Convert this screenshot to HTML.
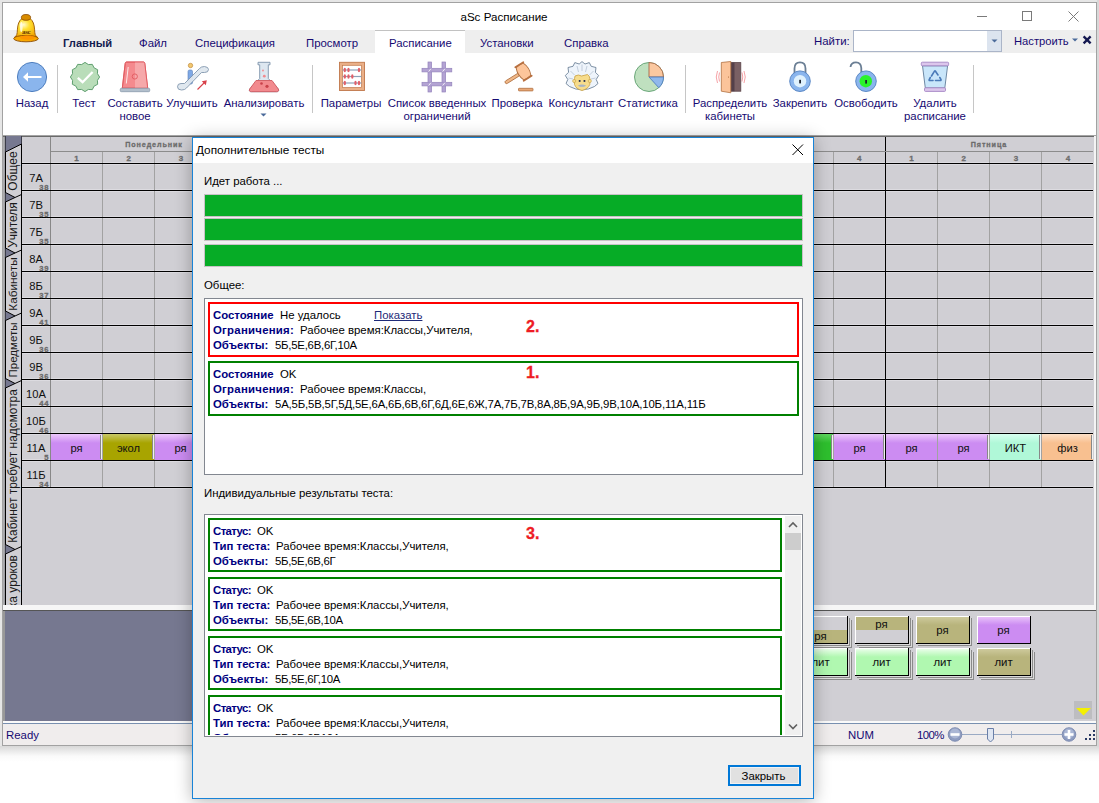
<!DOCTYPE html><html><head><meta charset="utf-8"><style>
html,body{margin:0;padding:0;}
body{width:1099px;height:803px;position:relative;overflow:hidden;background:#fff;font-family:"Liberation Sans",sans-serif;}
.t{position:absolute;white-space:nowrap;line-height:14px;}
.c{width:300px;text-align:center;}
.r{position:absolute;box-sizing:border-box;}
svg{position:absolute;overflow:visible;}
</style></head><body>

<div class="r" style="left:0px;top:0px;width:1099px;height:746px;background:#e6e6e6;"></div>
<div class="r" style="left:0px;top:746px;width:1099px;height:57px;background:linear-gradient(#d8d8d8,#fafafa 10px,#fff 16px);"></div>
<div class="r" style="left:1097px;top:0px;width:2px;height:746px;background:#d8d8d8;"></div>
<div class="r" style="left:2px;top:2px;width:1095px;height:744px;background:#fff;border:1px solid #a2a2a2;"></div>
<div class="t c" style="left:354px;top:10px;font-size:11.6px;color:#000;font-weight:normal;">aSc Расписание</div>
<svg style="left:0;top:0" width="1099" height="30"><g stroke="#7a7a7a" stroke-width="1" fill="none"><line x1="977" y1="16.5" x2="987" y2="16.5"/><rect x="1022.5" y="11.5" width="9" height="9"/><line x1="1068.5" y1="11.5" x2="1078.5" y2="21.5"/><line x1="1078.5" y1="11.5" x2="1068.5" y2="21.5"/></g></svg>
<div class="r" style="left:3px;top:30px;width:1093px;height:23px;background:#eeeeee;"></div>
<div class="r" style="left:375px;top:30px;width:90px;height:24px;background:#fff;border-top:1px solid #c2c2c2;"></div>
<div class="t" style="left:63px;top:36px;font-size:11.2px;color:#141c50;font-weight:bold;">Главный</div>
<div class="t" style="left:139px;top:36px;font-size:11.4px;color:#160a72;font-weight:normal;">Файл</div>
<div class="t" style="left:195px;top:36px;font-size:11.4px;color:#160a72;font-weight:normal;">Спецификация</div>
<div class="t" style="left:306px;top:36px;font-size:11.4px;color:#160a72;font-weight:normal;">Просмотр</div>
<div class="t" style="left:389px;top:36px;font-size:11.4px;color:#160a72;font-weight:normal;">Расписание</div>
<div class="t" style="left:480px;top:36px;font-size:11.4px;color:#160a72;font-weight:normal;">Установки</div>
<div class="t" style="left:564px;top:36px;font-size:11.4px;color:#160a72;font-weight:normal;">Справка</div>
<div class="t" style="left:814px;top:34px;font-size:11.4px;color:#160a72;font-weight:normal;">Найти:</div>
<div class="r" style="left:853px;top:30px;width:149px;height:22px;background:#fff;border:1px solid #abb5c8;"></div>
<div class="r" style="left:987px;top:31px;width:14px;height:20px;background:#dce4ef;"></div>
<svg style="left:0;top:0" width="1099" height="60"><path d="M991.5 39.5 L997.5 39.5 L994.5 42.5 Z" fill="#4a6a9a"/><path d="M1072 38.5 L1078 38.5 L1075 41.5 Z" fill="#4a6a9a"/><g stroke="#141850" stroke-width="2.3"><line x1="1083.6" y1="36.4" x2="1090.6" y2="43.4"/><line x1="1090.6" y1="36.4" x2="1083.6" y2="43.4"/></g></svg>
<div class="t" style="left:1014px;top:34px;font-size:11.2px;color:#160a72;font-weight:normal;">Настроить</div>
<div class="r" style="left:3px;top:53px;width:1093px;height:82px;background:#fff;"></div>
<div class="r" style="left:3px;top:135px;width:1093px;height:1px;background:#a4a4a4;"></div>
<div class="r" style="left:3px;top:136px;width:1093px;height:1px;background:#6a6a6a;"></div>
<div class="t c" style="left:-118px;top:96px;font-size:11.4px;color:#160a72;font-weight:normal;">Назад</div>
<div class="t c" style="left:-66px;top:96px;font-size:11.4px;color:#160a72;font-weight:normal;">Тест</div>
<div class="t c" style="left:-15px;top:96px;font-size:11.4px;color:#160a72;font-weight:normal;">Составить</div>
<div class="t c" style="left:-15px;top:109px;font-size:11.4px;color:#160a72;font-weight:normal;">новое</div>
<div class="t c" style="left:42px;top:96px;font-size:11.4px;color:#160a72;font-weight:normal;">Улучшить</div>
<div class="t c" style="left:114px;top:96px;font-size:11.4px;color:#160a72;font-weight:normal;">Анализировать</div>
<div class="t c" style="left:201px;top:96px;font-size:11.4px;color:#160a72;font-weight:normal;">Параметры</div>
<div class="t c" style="left:287px;top:96px;font-size:11.4px;color:#160a72;font-weight:normal;">Список введенных</div>
<div class="t c" style="left:287px;top:109px;font-size:11.4px;color:#160a72;font-weight:normal;">ограничений</div>
<div class="t c" style="left:367px;top:96px;font-size:11.4px;color:#160a72;font-weight:normal;">Проверка</div>
<div class="t c" style="left:431px;top:96px;font-size:11.4px;color:#160a72;font-weight:normal;">Консультант</div>
<div class="t c" style="left:498px;top:96px;font-size:11.4px;color:#160a72;font-weight:normal;">Статистика</div>
<div class="t c" style="left:580px;top:96px;font-size:11.4px;color:#160a72;font-weight:normal;">Распределить</div>
<div class="t c" style="left:580px;top:109px;font-size:11.4px;color:#160a72;font-weight:normal;">кабинеты</div>
<div class="t c" style="left:650px;top:96px;font-size:11.4px;color:#160a72;font-weight:normal;">Закрепить</div>
<div class="t c" style="left:716px;top:96px;font-size:11.4px;color:#160a72;font-weight:normal;">Освободить</div>
<div class="t c" style="left:785px;top:96px;font-size:11.4px;color:#160a72;font-weight:normal;">Удалить</div>
<div class="t c" style="left:785px;top:109px;font-size:11.4px;color:#160a72;font-weight:normal;">расписание</div>
<div class="r" style="left:57px;top:65px;width:1px;height:48px;background:#c6c6c6;"></div>
<div class="r" style="left:312px;top:65px;width:1px;height:48px;background:#c6c6c6;"></div>
<div class="r" style="left:685px;top:65px;width:1px;height:48px;background:#c6c6c6;"></div>
<div class="r" style="left:973px;top:65px;width:1px;height:48px;background:#c6c6c6;"></div>
<svg style="left:0;top:0" width="1099" height="130"><path d="M260.5 113.5 L266.5 113.5 L263.5 116.5 Z" fill="#4a6a9a"/></svg>
<svg style="left:0;top:0" width="1099" height="135" viewBox="0 0 1099 135">
<defs>
<radialGradient id="bellg" cx="0.4" cy="0.35" r="0.7"><stop offset="0" stop-color="#fffbd0"/><stop offset="0.35" stop-color="#ffe030"/><stop offset="1" stop-color="#f0a000"/></radialGradient>
</defs>
<!-- bell logo -->
<g>
<path d="M20 20.5 C22 16.8 30 16.8 32 20.5 C34.3 23.5 34.5 28 34.8 32.5 C35 35.5 36.5 36.5 38 37.8 L14 37.8 C15.5 36.5 17 35.5 17.2 32.5 C17.5 28 17.7 23.5 20 20.5 Z" fill="url(#bellg)" stroke="#9a5800" stroke-width="0.9"/>
<ellipse cx="21.3" cy="27" rx="1.3" ry="5" fill="#fff" opacity="0.75"/>
<ellipse cx="26" cy="38.6" rx="12.3" ry="3.2" fill="#f8a800" stroke="#8a4a00" stroke-width="0.9"/>
<ellipse cx="27.5" cy="37.5" rx="7.5" ry="2.2" fill="#ff9000" opacity="0.8"/>
<ellipse cx="26" cy="17.4" rx="4.6" ry="2.9" fill="#d88c00" stroke="#8a4a00" stroke-width="0.8"/>
<text x="26.2" y="34" font-family="Liberation Serif" font-size="7" text-anchor="middle" fill="#6a3800" font-weight="bold" letter-spacing="-0.3">asc</text>
</g>
<!-- Назад -->
<circle cx="32" cy="77" r="14.6" fill="#8ab5ed" stroke="#4f7fbf" stroke-width="1"/>
<path d="M23 77 L28 72.3 L28 75.9 L41.5 75.9 L41.5 78.1 L28 78.1 L28 81.7 Z" fill="#fff"/>
<!-- Тест badge -->
<path d="M85.00 62.40 L88.34 64.54 L92.30 64.36 L94.12 67.88 L97.64 69.70 L97.46 73.66 L99.60 77.00 L97.46 80.34 L97.64 84.30 L94.12 86.12 L92.30 89.64 L88.34 89.46 L85.00 91.60 L81.66 89.46 L77.70 89.64 L75.88 86.12 L72.36 84.30 L72.54 80.34 L70.40 77.00 L72.54 73.66 L72.36 69.70 L75.88 67.88 L77.70 64.36 L81.66 64.54 Z" fill="#b9ddb9" stroke="#5f9f6f" stroke-width="1"/>
<polyline points="77.8,77.8 82.6,82.2 92.6,72" fill="none" stroke="#fff" stroke-width="2.3"/>
<!-- Siren -->
<path d="M126.5 62 L143.5 62 Q144.5 62 144.8 63.5 L147.7 88.2 L122.3 88.2 L125.2 63.5 Q125.5 62 126.5 62 Z" fill="#f48a8e" stroke="#e05a60" stroke-width="0.9"/>
<path d="M135 62 L143.5 62 Q144.5 62 144.8 63.5 L147.7 88.2 L135 88.2 Z" fill="#f6a8aa"/>
<path d="M126.5 62 L143.5 62 Q144.5 62 144.8 63.5 L147.7 88.2 L122.3 88.2 L125.2 63.5 Q125.5 62 126.5 62 Z" fill="none" stroke="#e05a60" stroke-width="0.9"/>
<line x1="128.2" y1="67" x2="126.3" y2="83.5" stroke="#fff" stroke-width="0.9" opacity="0.9"/>
<circle cx="134.8" cy="76.5" r="2.6" fill="none" stroke="#e05a60" stroke-width="0.9"/>
<rect x="120.3" y="88.3" width="29.4" height="3.4" rx="1" fill="#b2bfcc" stroke="#8a9aac" stroke-width="0.8"/>
<!-- Escalator -->
<circle cx="190.5" cy="65.5" r="2.2" fill="#f2c870" stroke="#c08a3a" stroke-width="0.7"/>
<rect x="188" y="70" width="4.5" height="14" rx="1.5" fill="#7fa9e6" stroke="#5a80b8" stroke-width="0.6"/>
<path d="M181 83.5 L184.5 83.5 L199.5 68.5 Q201 66.5 204.5 66.5 Q208.5 67 208.5 69.5 Q208.5 72.5 204.5 72.5 L201.5 72.5 L186.5 88 Q185 90 181.5 90 Q177.5 90 177.5 86.8 Q177.5 83.5 181 83.5 Z" fill="#dfe7ef" stroke="#7d93aa" stroke-width="0.9" opacity="0.95"/>
<line x1="197.5" y1="89.5" x2="205.5" y2="81.5" stroke="#d8404a" stroke-width="1.1"/>
<path d="M206.8 80.2 L201.8 81.2 L205.8 85.2 Z" fill="#d8404a"/>
<!-- Flask -->
<path d="M258 62.3 L270 62.3 L270 64.8 L268.3 64.8 L268.3 78.5 L278.3 89 Q279.5 91.7 276.5 91.7 L251.5 91.7 Q248.5 91.7 249.7 89 L259.7 78.5 L259.7 64.8 L258 64.8 Z" fill="#dde7f0" stroke="#7d93aa" stroke-width="0.9"/>
<path d="M256 80.5 L272 80.5 L278.3 89 Q279.5 91.7 276.5 91.7 L251.5 91.7 Q248.5 91.7 249.7 89 Z" fill="#f28a8e" stroke="#d05a60" stroke-width="0.9"/>
<circle cx="263" cy="70.5" r="0.9" fill="#f28a8e"/><circle cx="264.3" cy="76.2" r="1.4" fill="#f28a8e"/>
<circle cx="261.5" cy="83.5" r="1.3" fill="#c8424a"/><circle cx="267" cy="86.3" r="1.6" fill="#c8424a"/>
<!-- Abacus -->
<rect x="339.5" y="62.3" width="25" height="28.2" fill="#eab088" stroke="#c0784a" stroke-width="0.9"/>
<rect x="342.5" y="65.3" width="19" height="22.2" fill="#fff" stroke="#c0784a" stroke-width="0.7"/>
<g stroke="#8ea2b8" stroke-width="1.2"><line x1="342.5" y1="70" x2="361.5" y2="70"/><line x1="342.5" y1="76.5" x2="361.5" y2="76.5"/><line x1="342.5" y1="83" x2="361.5" y2="83"/></g>
<g fill="#e0606a"><ellipse cx="344.8" cy="70" rx="1.2" ry="2.3"/><ellipse cx="348.5" cy="70" rx="1.2" ry="2.3"/><ellipse cx="359" cy="70" rx="1.2" ry="2.3"/>
<ellipse cx="344.8" cy="76.5" rx="1.2" ry="2.3"/><ellipse cx="348.5" cy="76.5" rx="1.2" ry="2.3"/><ellipse cx="352.3" cy="76.5" rx="1.2" ry="2.3"/>
<ellipse cx="344.8" cy="83" rx="1.2" ry="2.3"/><ellipse cx="355.5" cy="83" rx="1.2" ry="2.3"/><ellipse cx="359" cy="83" rx="1.2" ry="2.3"/></g>
<!-- Hash -->
<g fill="#b3a3d3" stroke="#9484bc" stroke-width="0.7">
<rect x="428" y="62" width="3.6" height="30"/><rect x="442" y="62" width="3.6" height="30"/>
<rect x="422" y="68.3" width="29.8" height="3.6"/><rect x="422" y="82.3" width="29.8" height="3.6"/>
</g>
<g fill="#b3a3d3"><rect x="428.4" y="68.7" width="2.8" height="2.8"/><rect x="442.4" y="68.7" width="2.8" height="2.8"/><rect x="428.4" y="82.7" width="2.8" height="2.8"/><rect x="442.4" y="82.7" width="2.8" height="2.8"/></g>
<g stroke="#fff" stroke-width="0.8"><line x1="428.6" y1="71.6" x2="431" y2="68.6"/><line x1="442.6" y1="71.6" x2="445" y2="68.6"/><line x1="428.6" y1="85.6" x2="431" y2="82.6"/><line x1="442.6" y1="85.6" x2="445" y2="82.6"/></g>
<!-- Gavel -->
<g transform="translate(523.5 71.5) rotate(-32)">
<rect x="-21.5" y="-1.5" width="16.5" height="3" rx="1.5" fill="#f0b888" stroke="#b07040" stroke-width="0.8"/>
<path d="M-4.2 -7.2 Q0 -8.4 4.2 -7.2 Q7.4 0 4.2 7.2 Q0 8.4 -4.2 7.2 Q-7.4 0 -4.2 -7.2 Z" fill="#fdc59a" stroke="#b07040" stroke-width="0.9"/>
<rect x="-5.6" y="-8.8" width="11.2" height="1.8" rx="0.9" fill="#b87040"/>
<rect x="-5.6" y="7" width="11.2" height="1.8" rx="0.9" fill="#b87040"/>
</g>
<rect x="518.5" y="88.3" width="14.5" height="2.6" rx="0.6" fill="#e8a878" stroke="#b07040" stroke-width="0.8"/>
<!-- Einstein -->
<path d="M569.5 86.5 L566 83.5 L567.8 79.5 L565.3 75.5 L568.6 72.3 L568 67.5 L573 66.3 L574.8 62.6 L579.2 64 L582 61.6 L585 64 L589.3 62.6 L591.2 66.3 L596 67.5 L595.4 72.3 L598.6 75.5 L596.2 79.5 L598 83.5 L594.5 86.5 Q588.5 89.8 582 89.8 Q575.5 89.8 569.5 86.5 Z" fill="#eef4fb" stroke="#60768e" stroke-width="0.8" stroke-linejoin="round"/>
<g stroke="#a4b4c6" stroke-width="0.6" fill="none"><path d="M577 66 L578.5 72"/><path d="M582 64.5 L582 71"/><path d="M587 66 L585.5 72"/><path d="M570.5 71 L574.5 75"/><path d="M593.5 71 L589.5 75"/><path d="M568.5 78 L573 79"/><path d="M595.5 78 L591 79"/></g>
<path d="M575 76 Q578.5 74 581.5 76 L587.5 74.5 Q589.8 76 589.8 78.5 L589.8 84.5 Q588 89 582 90.5 Q576 89 574.5 84.5 L574.5 78.5 Z" fill="#f6dc8c" stroke="#c8a040" stroke-width="0.8"/>
<circle cx="574.2" cy="81" r="1.6" fill="#f6dc8c" stroke="#c8a040" stroke-width="0.6"/><circle cx="589.8" cy="81" r="1.6" fill="#f6dc8c" stroke="#c8a040" stroke-width="0.6"/>
<rect x="578.8" y="80" width="1.7" height="1.9" fill="#2a3450"/><rect x="583.6" y="80" width="1.7" height="1.9" fill="#2a3450"/>
<path d="M577.8 85.8 Q582 83.3 586.2 85.8 Q584 87.3 582 86.8 Q580 87.3 577.8 85.8 Z" fill="#a8b4c4"/>
<!-- Pie -->
<circle cx="649" cy="77" r="14.5" fill="#bfe0bf" stroke="#5f9f6f" stroke-width="0.9"/>
<path d="M649 77 L649 62.5 A14.5 14.5 0 0 1 663.5 77 Z" fill="#fbc8a0" stroke="#a86848" stroke-width="0.9"/>
<path d="M649 77 L663.5 77 A14.5 14.5 0 0 1 658.8 87.7 Z" fill="#90b8ec" stroke="#4f7fbf" stroke-width="0.9"/>
<!-- Door -->
<g fill="none" stroke="#f07a80" stroke-width="0.7"><path d="M717.5 71 Q715 77 717.5 83"/><path d="M719.5 72.5 Q718 77 719.5 81.5"/><path d="M744 71 Q746.5 77 744 83"/><path d="M742 72.5 Q743.5 77 742 81.5"/></g>
<rect x="730.5" y="62.6" width="10.3" height="28.6" fill="#7a6064" stroke="#5a4448" stroke-width="0.8"/>
<rect x="730.5" y="62.6" width="4" height="28.6" fill="#54404a"/>
<path d="M721.3 62.5 L730.8 61.5 L730.8 92.8 L721.3 91.2 Z" fill="#fbc49a" stroke="#b07040" stroke-width="0.8"/>
<rect x="728" y="76.5" width="0.8" height="1.2" fill="#b07040"/>
<!-- Lock -->
<path d="M794.5 74 L794.5 68.5 Q794.5 62.3 800 62.3 Q805.5 62.3 805.5 68.5 L805.5 74" fill="none" stroke="#6a7e94" stroke-width="1.8"/>
<circle cx="800" cy="81.2" r="10.3" fill="#8ab5ed" stroke="#4f7fbf" stroke-width="0.9"/>
<circle cx="800" cy="81.2" r="6.2" fill="#dff1fd"/>
<rect x="799.2" y="79.8" width="1.8" height="3.6" fill="#1e2430"/>
<!-- Open lock -->
<path d="M850.5 67 Q851 62.3 856 62.3 Q861 62.3 861.3 68 L861.3 72.5" fill="none" stroke="#6a7e94" stroke-width="1.8"/>
<circle cx="866" cy="81.2" r="10.3" fill="#8ab5ed" stroke="#4f7fbf" stroke-width="0.9"/>
<circle cx="865.8" cy="81.2" r="6.2" fill="#2af22a"/>
<rect x="865.2" y="80" width="1.8" height="3.6" fill="#1e2430"/>
<!-- Trash -->
<path d="M922.5 65.8 L947.6 65.8 L944.8 88 L925.3 88 Z" fill="#c9e6fa" stroke="#607c98" stroke-width="0.9"/>
<rect x="921.3" y="62.2" width="27.3" height="3.6" rx="1" fill="#dcc6ec" stroke="#a486c4" stroke-width="0.9"/>
<rect x="924.5" y="87.8" width="21" height="3.6" rx="1" fill="#dcc6ec" stroke="#a486c4" stroke-width="0.9"/>
<g fill="none" stroke="#4a7ab8" stroke-width="1.6" stroke-linecap="round"><path d="M931.5 76 L934.5 71.2 Q935 70.5 935.5 71.2 L938 75"/><path d="M939.8 77.5 L941 79.5 Q941.3 80.5 940.3 80.5 L935.5 80.5"/><path d="M933 80.5 L929.8 80.5 Q928.8 80.5 929.2 79.5 L930.3 77.5"/></g>
</svg>

<div class="r" style="left:3px;top:137px;width:1091px;height:468px;background:#d0cfd4;"></div>
<div class="r" style="left:1094px;top:136px;width:2px;height:469px;background:#f4f4f4;"></div>
<div class="r" style="left:3px;top:137px;width:2px;height:468px;background:linear-gradient(90deg,#b4b4b6,#98989c);"></div>
<div class="r" style="left:5px;top:136px;width:1px;height:469px;background:#000;"></div>
<div class="r" style="left:21px;top:136px;width:1px;height:469px;background:#000;"></div>
<div class="r" style="left:22px;top:164px;width:1071px;height:1px;background:#dcdbe0;"></div>
<div class="r" style="left:22px;top:162px;width:1071px;height:1px;background:#dcdbe0;"></div>
<div class="r" style="left:22px;top:191px;width:1071px;height:1px;background:#dcdbe0;"></div>
<div class="r" style="left:22px;top:189px;width:1071px;height:1px;background:#dcdbe0;"></div>
<div class="r" style="left:22px;top:218px;width:1071px;height:1px;background:#dcdbe0;"></div>
<div class="r" style="left:22px;top:216px;width:1071px;height:1px;background:#dcdbe0;"></div>
<div class="r" style="left:22px;top:245px;width:1071px;height:1px;background:#dcdbe0;"></div>
<div class="r" style="left:22px;top:243px;width:1071px;height:1px;background:#dcdbe0;"></div>
<div class="r" style="left:22px;top:272px;width:1071px;height:1px;background:#dcdbe0;"></div>
<div class="r" style="left:22px;top:270px;width:1071px;height:1px;background:#dcdbe0;"></div>
<div class="r" style="left:22px;top:299px;width:1071px;height:1px;background:#dcdbe0;"></div>
<div class="r" style="left:22px;top:297px;width:1071px;height:1px;background:#dcdbe0;"></div>
<div class="r" style="left:22px;top:326px;width:1071px;height:1px;background:#dcdbe0;"></div>
<div class="r" style="left:22px;top:324px;width:1071px;height:1px;background:#dcdbe0;"></div>
<div class="r" style="left:22px;top:353px;width:1071px;height:1px;background:#dcdbe0;"></div>
<div class="r" style="left:22px;top:351px;width:1071px;height:1px;background:#dcdbe0;"></div>
<div class="r" style="left:22px;top:380px;width:1071px;height:1px;background:#dcdbe0;"></div>
<div class="r" style="left:22px;top:378px;width:1071px;height:1px;background:#dcdbe0;"></div>
<div class="r" style="left:22px;top:407px;width:1071px;height:1px;background:#dcdbe0;"></div>
<div class="r" style="left:22px;top:405px;width:1071px;height:1px;background:#dcdbe0;"></div>
<div class="r" style="left:22px;top:434px;width:1071px;height:1px;background:#dcdbe0;"></div>
<div class="r" style="left:22px;top:432px;width:1071px;height:1px;background:#dcdbe0;"></div>
<div class="r" style="left:22px;top:461px;width:1071px;height:1px;background:#dcdbe0;"></div>
<div class="r" style="left:22px;top:459px;width:1071px;height:1px;background:#dcdbe0;"></div>
<div class="r" style="left:22px;top:488px;width:1071px;height:1px;background:#dcdbe0;"></div>
<div class="r" style="left:22px;top:486px;width:1071px;height:1px;background:#dcdbe0;"></div>
<div class="r" style="left:50px;top:137px;width:1px;height:350px;background:#888;"></div>
<div class="r" style="left:102px;top:151px;width:1px;height:336px;background:#a2a2a2;"></div>
<div class="r" style="left:154px;top:151px;width:1px;height:336px;background:#a2a2a2;"></div>
<div class="r" style="left:206px;top:151px;width:1px;height:336px;background:#a2a2a2;"></div>
<div class="r" style="left:259px;top:137px;width:1px;height:350px;background:#000;"></div>
<div class="r" style="left:311px;top:151px;width:1px;height:336px;background:#a2a2a2;"></div>
<div class="r" style="left:363px;top:151px;width:1px;height:336px;background:#a2a2a2;"></div>
<div class="r" style="left:415px;top:151px;width:1px;height:336px;background:#a2a2a2;"></div>
<div class="r" style="left:467px;top:137px;width:1px;height:350px;background:#000;"></div>
<div class="r" style="left:519px;top:151px;width:1px;height:336px;background:#a2a2a2;"></div>
<div class="r" style="left:572px;top:151px;width:1px;height:336px;background:#a2a2a2;"></div>
<div class="r" style="left:624px;top:151px;width:1px;height:336px;background:#a2a2a2;"></div>
<div class="r" style="left:676px;top:137px;width:1px;height:350px;background:#000;"></div>
<div class="r" style="left:728px;top:151px;width:1px;height:336px;background:#a2a2a2;"></div>
<div class="r" style="left:780px;top:151px;width:1px;height:336px;background:#a2a2a2;"></div>
<div class="r" style="left:833px;top:151px;width:1px;height:336px;background:#a2a2a2;"></div>
<div class="r" style="left:885px;top:137px;width:1px;height:350px;background:#000;"></div>
<div class="r" style="left:937px;top:151px;width:1px;height:336px;background:#a2a2a2;"></div>
<div class="r" style="left:989px;top:151px;width:1px;height:336px;background:#a2a2a2;"></div>
<div class="r" style="left:1041px;top:151px;width:1px;height:336px;background:#a2a2a2;"></div>
<div class="r" style="left:22px;top:163px;width:1071px;height:1px;background:#000;"></div>
<div class="r" style="left:22px;top:190px;width:1071px;height:1px;background:#000;"></div>
<div class="r" style="left:22px;top:217px;width:1071px;height:1px;background:#000;"></div>
<div class="r" style="left:22px;top:244px;width:1071px;height:1px;background:#000;"></div>
<div class="r" style="left:22px;top:271px;width:1071px;height:1px;background:#000;"></div>
<div class="r" style="left:22px;top:298px;width:1071px;height:1px;background:#000;"></div>
<div class="r" style="left:22px;top:325px;width:1071px;height:1px;background:#000;"></div>
<div class="r" style="left:22px;top:352px;width:1071px;height:1px;background:#000;"></div>
<div class="r" style="left:22px;top:379px;width:1071px;height:1px;background:#000;"></div>
<div class="r" style="left:22px;top:406px;width:1071px;height:1px;background:#000;"></div>
<div class="r" style="left:22px;top:433px;width:1071px;height:1px;background:#000;"></div>
<div class="r" style="left:22px;top:460px;width:1071px;height:1px;background:#000;"></div>
<div class="r" style="left:22px;top:487px;width:1071px;height:1px;background:#000;"></div>
<div class="r" style="left:51px;top:151px;width:1042px;height:1px;background:#8c8c8c;"></div>
<div class="t c" style="left:4.0px;top:138px;font-size:7.2px;color:#6c6c6c;font-weight:bold;letter-spacing:0.9px;-webkit-text-stroke:0.3px #6c6c6c;">Понедельник</div>
<div class="t c" style="left:-73.5px;top:152px;font-size:8px;color:#6c6c6c;font-weight:bold;-webkit-text-stroke:0.3px #6c6c6c;">1</div>
<div class="t c" style="left:-21.3125px;top:152px;font-size:8px;color:#6c6c6c;font-weight:bold;-webkit-text-stroke:0.3px #6c6c6c;">2</div>
<div class="t c" style="left:30.875px;top:152px;font-size:8px;color:#6c6c6c;font-weight:bold;-webkit-text-stroke:0.3px #6c6c6c;">3</div>
<div class="t c" style="left:83.0625px;top:152px;font-size:8px;color:#6c6c6c;font-weight:bold;-webkit-text-stroke:0.3px #6c6c6c;">4</div>
<div class="t c" style="left:212.75px;top:138px;font-size:7.2px;color:#6c6c6c;font-weight:bold;letter-spacing:0.9px;-webkit-text-stroke:0.3px #6c6c6c;">Вторник</div>
<div class="t c" style="left:135.25px;top:152px;font-size:8px;color:#6c6c6c;font-weight:bold;-webkit-text-stroke:0.3px #6c6c6c;">1</div>
<div class="t c" style="left:187.4375px;top:152px;font-size:8px;color:#6c6c6c;font-weight:bold;-webkit-text-stroke:0.3px #6c6c6c;">2</div>
<div class="t c" style="left:239.625px;top:152px;font-size:8px;color:#6c6c6c;font-weight:bold;-webkit-text-stroke:0.3px #6c6c6c;">3</div>
<div class="t c" style="left:291.8125px;top:152px;font-size:8px;color:#6c6c6c;font-weight:bold;-webkit-text-stroke:0.3px #6c6c6c;">4</div>
<div class="t c" style="left:421.5px;top:138px;font-size:7.2px;color:#6c6c6c;font-weight:bold;letter-spacing:0.9px;-webkit-text-stroke:0.3px #6c6c6c;">Среда</div>
<div class="t c" style="left:344.0px;top:152px;font-size:8px;color:#6c6c6c;font-weight:bold;-webkit-text-stroke:0.3px #6c6c6c;">1</div>
<div class="t c" style="left:396.1875px;top:152px;font-size:8px;color:#6c6c6c;font-weight:bold;-webkit-text-stroke:0.3px #6c6c6c;">2</div>
<div class="t c" style="left:448.375px;top:152px;font-size:8px;color:#6c6c6c;font-weight:bold;-webkit-text-stroke:0.3px #6c6c6c;">3</div>
<div class="t c" style="left:500.5625px;top:152px;font-size:8px;color:#6c6c6c;font-weight:bold;-webkit-text-stroke:0.3px #6c6c6c;">4</div>
<div class="t c" style="left:630.25px;top:138px;font-size:7.2px;color:#6c6c6c;font-weight:bold;letter-spacing:0.9px;-webkit-text-stroke:0.3px #6c6c6c;">Четверг</div>
<div class="t c" style="left:552.75px;top:152px;font-size:8px;color:#6c6c6c;font-weight:bold;-webkit-text-stroke:0.3px #6c6c6c;">1</div>
<div class="t c" style="left:604.9375px;top:152px;font-size:8px;color:#6c6c6c;font-weight:bold;-webkit-text-stroke:0.3px #6c6c6c;">2</div>
<div class="t c" style="left:657.125px;top:152px;font-size:8px;color:#6c6c6c;font-weight:bold;-webkit-text-stroke:0.3px #6c6c6c;">3</div>
<div class="t c" style="left:709.3125px;top:152px;font-size:8px;color:#6c6c6c;font-weight:bold;-webkit-text-stroke:0.3px #6c6c6c;">4</div>
<div class="t c" style="left:839.0px;top:138px;font-size:7.2px;color:#6c6c6c;font-weight:bold;letter-spacing:0.9px;-webkit-text-stroke:0.3px #6c6c6c;">Пятница</div>
<div class="t c" style="left:761.5px;top:152px;font-size:8px;color:#6c6c6c;font-weight:bold;-webkit-text-stroke:0.3px #6c6c6c;">1</div>
<div class="t c" style="left:813.6875px;top:152px;font-size:8px;color:#6c6c6c;font-weight:bold;-webkit-text-stroke:0.3px #6c6c6c;">2</div>
<div class="t c" style="left:865.875px;top:152px;font-size:8px;color:#6c6c6c;font-weight:bold;-webkit-text-stroke:0.3px #6c6c6c;">3</div>
<div class="t c" style="left:918.0625px;top:152px;font-size:8px;color:#6c6c6c;font-weight:bold;-webkit-text-stroke:0.3px #6c6c6c;">4</div>
<div class="t c" style="left:-114px;top:171px;font-size:11.2px;color:#101010;font-weight:normal;">7A</div>
<div class="t" style="left:0px;width:49px;text-align:right;top:182.5px;font-size:7.6px;line-height:10px;color:#6a6a6a;font-weight:bold;letter-spacing:0.6px;-webkit-text-stroke:0.3px #6a6a6a;">38</div>
<div class="t c" style="left:-114px;top:198px;font-size:11.2px;color:#101010;font-weight:normal;">7В</div>
<div class="t" style="left:0px;width:49px;text-align:right;top:209.5px;font-size:7.6px;line-height:10px;color:#6a6a6a;font-weight:bold;letter-spacing:0.6px;-webkit-text-stroke:0.3px #6a6a6a;">35</div>
<div class="t c" style="left:-114px;top:225px;font-size:11.2px;color:#101010;font-weight:normal;">7Б</div>
<div class="t" style="left:0px;width:49px;text-align:right;top:236.5px;font-size:7.6px;line-height:10px;color:#6a6a6a;font-weight:bold;letter-spacing:0.6px;-webkit-text-stroke:0.3px #6a6a6a;">35</div>
<div class="t c" style="left:-114px;top:252px;font-size:11.2px;color:#101010;font-weight:normal;">8A</div>
<div class="t" style="left:0px;width:49px;text-align:right;top:263.5px;font-size:7.6px;line-height:10px;color:#6a6a6a;font-weight:bold;letter-spacing:0.6px;-webkit-text-stroke:0.3px #6a6a6a;">39</div>
<div class="t c" style="left:-114px;top:279px;font-size:11.2px;color:#101010;font-weight:normal;">8Б</div>
<div class="t" style="left:0px;width:49px;text-align:right;top:290.5px;font-size:7.6px;line-height:10px;color:#6a6a6a;font-weight:bold;letter-spacing:0.6px;-webkit-text-stroke:0.3px #6a6a6a;">37</div>
<div class="t c" style="left:-114px;top:306px;font-size:11.2px;color:#101010;font-weight:normal;">9A</div>
<div class="t" style="left:0px;width:49px;text-align:right;top:317.5px;font-size:7.6px;line-height:10px;color:#6a6a6a;font-weight:bold;letter-spacing:0.6px;-webkit-text-stroke:0.3px #6a6a6a;">41</div>
<div class="t c" style="left:-114px;top:333px;font-size:11.2px;color:#101010;font-weight:normal;">9Б</div>
<div class="t" style="left:0px;width:49px;text-align:right;top:344.5px;font-size:7.6px;line-height:10px;color:#6a6a6a;font-weight:bold;letter-spacing:0.6px;-webkit-text-stroke:0.3px #6a6a6a;">36</div>
<div class="t c" style="left:-114px;top:360px;font-size:11.2px;color:#101010;font-weight:normal;">9В</div>
<div class="t" style="left:0px;width:49px;text-align:right;top:371.5px;font-size:7.6px;line-height:10px;color:#6a6a6a;font-weight:bold;letter-spacing:0.6px;-webkit-text-stroke:0.3px #6a6a6a;">36</div>
<div class="t c" style="left:-114px;top:387px;font-size:11.2px;color:#101010;font-weight:normal;">10A</div>
<div class="t" style="left:0px;width:49px;text-align:right;top:398.5px;font-size:7.6px;line-height:10px;color:#6a6a6a;font-weight:bold;letter-spacing:0.6px;-webkit-text-stroke:0.3px #6a6a6a;">44</div>
<div class="t c" style="left:-114px;top:414px;font-size:11.2px;color:#101010;font-weight:normal;">10Б</div>
<div class="t" style="left:0px;width:49px;text-align:right;top:425.5px;font-size:7.6px;line-height:10px;color:#6a6a6a;font-weight:bold;letter-spacing:0.6px;-webkit-text-stroke:0.3px #6a6a6a;">46</div>
<div class="t c" style="left:-114px;top:441px;font-size:11.2px;color:#101010;font-weight:normal;">11A</div>
<div class="t" style="left:0px;width:49px;text-align:right;top:452.5px;font-size:7.6px;line-height:10px;color:#6a6a6a;font-weight:bold;letter-spacing:0.6px;-webkit-text-stroke:0.3px #6a6a6a;">5</div>
<div class="t c" style="left:-114px;top:468px;font-size:11.2px;color:#101010;font-weight:normal;">11Б</div>
<div class="t" style="left:0px;width:49px;text-align:right;top:479.5px;font-size:7.6px;line-height:10px;color:#6a6a6a;font-weight:bold;letter-spacing:0.6px;-webkit-text-stroke:0.3px #6a6a6a;">34</div>
<div class="r" style="left:51px;top:434px;width:51px;height:26px;background:linear-gradient(#ecc8fb,#cc8cf2 9px);"></div>
<div class="t c" style="left:-73.5px;top:440.5px;font-size:11.2px;color:#101010;font-weight:normal;">ря</div>
<div class="r" style="left:103px;top:434px;width:51px;height:26px;background:linear-gradient(#c8c868,#a8a400 9px);"></div>
<div class="t c" style="left:-21.5px;top:440.5px;font-size:11.2px;color:#101010;font-weight:normal;">экол</div>
<div class="r" style="left:155px;top:434px;width:51px;height:26px;background:linear-gradient(#ecc8fb,#cc8cf2 9px);"></div>
<div class="t c" style="left:30.5px;top:440.5px;font-size:11.2px;color:#101010;font-weight:normal;">ря</div>
<div class="r" style="left:781px;top:434px;width:52px;height:26px;background:linear-gradient(#60d860,#2ec02e 9px);"></div>
<div class="t c" style="left:657.0px;top:440.5px;font-size:11.2px;color:#101010;font-weight:normal;"></div>
<div class="r" style="left:834px;top:434px;width:51px;height:26px;background:linear-gradient(#ecc8fb,#cc8cf2 9px);"></div>
<div class="t c" style="left:709.5px;top:440.5px;font-size:11.2px;color:#101010;font-weight:normal;">ря</div>
<div class="r" style="left:886px;top:434px;width:51px;height:26px;background:linear-gradient(#ecc8fb,#cc8cf2 9px);"></div>
<div class="t c" style="left:761.5px;top:440.5px;font-size:11.2px;color:#101010;font-weight:normal;">ря</div>
<div class="r" style="left:938px;top:434px;width:51px;height:26px;background:linear-gradient(#ecc8fb,#cc8cf2 9px);"></div>
<div class="t c" style="left:813.5px;top:440.5px;font-size:11.2px;color:#101010;font-weight:normal;">ря</div>
<div class="r" style="left:990px;top:434px;width:51px;height:26px;background:linear-gradient(#d8fff0,#b0f8d8 9px);"></div>
<div class="t c" style="left:865.5px;top:440.5px;font-size:11.2px;color:#101010;font-weight:normal;">ИКТ</div>
<div class="r" style="left:1042px;top:434px;width:51px;height:26px;background:linear-gradient(#fde0c8,#f8c090 9px);"></div>
<div class="t c" style="left:917.5px;top:440.5px;font-size:11.2px;color:#101010;font-weight:normal;">физ</div>
<div class="r" style="left:100px;top:435px;width:2px;height:24px;background:#f0f0f0;border-left:1px solid #888;"></div>
<div class="r" style="left:152px;top:435px;width:2px;height:24px;background:#f0f0f0;border-left:1px solid #888;"></div>
<div class="r" style="left:831px;top:435px;width:2px;height:24px;background:#f0f0f0;border-left:1px solid #888;"></div>
<div class="r" style="left:883px;top:435px;width:2px;height:24px;background:#f0f0f0;border-left:1px solid #888;"></div>
<div class="r" style="left:987px;top:435px;width:2px;height:24px;background:#f0f0f0;border-left:1px solid #888;"></div>
<div class="r" style="left:1039px;top:435px;width:2px;height:24px;background:#f0f0f0;border-left:1px solid #888;"></div>
<div class="r" style="left:1091px;top:435px;width:2px;height:24px;background:#f0f0f0;border-left:1px solid #888;"></div>
<div class="r" style="left:0;top:136px;width:30px;height:469px;overflow:hidden;">
<div class="t" style="left:-87.2px;width:200px;text-align:center;top:28px;font-size:12px;color:#1a1a1a;transform:rotate(-90deg);">Общее</div>
<div class="t" style="left:-87.2px;width:200px;text-align:center;top:82px;font-size:12px;color:#1a1a1a;transform:rotate(-90deg);">Учителя</div>
<div class="t" style="left:-87.2px;width:200px;text-align:center;top:141px;font-size:11.8px;color:#1a1a1a;transform:rotate(-90deg);">Кабинеты</div>
<div class="t" style="left:-87.2px;width:200px;text-align:center;top:206.5px;font-size:11.5px;color:#1a1a1a;transform:rotate(-90deg);">Предметы</div>
<div class="t" style="left:-87.2px;width:200px;text-align:center;top:323px;font-size:11.9px;color:#1a1a1a;transform:rotate(-90deg);">Кабинет требует надсмотра</div>
<div class="t" style="left:-87.2px;width:200px;text-align:right;top:512px;font-size:12px;color:#1a1a1a;transform:rotate(-90deg);">Карточка уроков</div>
</div>
<svg style="left:0;top:0" width="30" height="610"><path d="M5.5 136 L21.5 136 L21.5 144 L5.5 152 Z" fill="#767890"/><line x1="5.5" y1="152" x2="21.5" y2="144" stroke="#000" stroke-width="1"/><path d="M5.5 192.5 L15 197.5 L5.5 202.0 Z" fill="#767890"/><polyline points="5.5,192.5 15,197.5 21.5,194.5" fill="none" stroke="#000" stroke-width="1"/><line x1="15" y1="197.5" x2="5.5" y2="202.0" stroke="#000" stroke-width="1"/><path d="M5.5 248 L15 253 L5.5 257.5 Z" fill="#767890"/><polyline points="5.5,248 15,253 21.5,250" fill="none" stroke="#000" stroke-width="1"/><line x1="15" y1="253" x2="5.5" y2="257.5" stroke="#000" stroke-width="1"/><path d="M5.5 311 L15 316 L5.5 320.5 Z" fill="#767890"/><polyline points="5.5,311 15,316 21.5,313" fill="none" stroke="#000" stroke-width="1"/><line x1="15" y1="316" x2="5.5" y2="320.5" stroke="#000" stroke-width="1"/><path d="M5.5 378.5 L15 383.5 L5.5 388.0 Z" fill="#767890"/><polyline points="5.5,378.5 15,383.5 21.5,380.5" fill="none" stroke="#000" stroke-width="1"/><line x1="15" y1="383.5" x2="5.5" y2="388.0" stroke="#000" stroke-width="1"/><path d="M5.5 544.5 L15 549.5 L5.5 554.0 Z" fill="#767890"/><polyline points="5.5,544.5 15,549.5 21.5,546.5" fill="none" stroke="#000" stroke-width="1"/><line x1="15" y1="549.5" x2="5.5" y2="554.0" stroke="#000" stroke-width="1"/></svg>
<div class="r" style="left:3px;top:605px;width:1093px;height:5px;background:#f6f6f6;"></div>
<div class="r" style="left:3px;top:610px;width:1093px;height:1px;background:#555;"></div>
<div class="r" style="left:3px;top:611px;width:1093px;height:110px;background:#d0cfd4;"></div>
<div class="r" style="left:3px;top:611px;width:189px;height:110px;background:#767890;"></div>
<div class="r" style="left:3px;top:611px;width:2px;height:110px;background:#999;"></div>
<div class="r" style="left:798px;top:620px;width:54px;height:28px;background:#dcdcdc;border-right:1px solid #8a8a8a;border-bottom:1px solid #8a8a8a;"></div>
<div class="r" style="left:796px;top:618px;width:54px;height:28px;background:#dcdcdc;border-right:1px solid #8a8a8a;border-bottom:1px solid #8a8a8a;"></div>
<div class="r" style="left:794px;top:616px;width:54px;height:28px;background:linear-gradient(#d0cfd4 0,#d0cfd4 14px,#b8b47c 14px);border-right:1px solid #000;border-bottom:1px solid #000;box-shadow:inset 1px 1px 0 #fff;"></div>
<div class="t c" style="left:670.5px;top:629px;font-size:11.4px;color:#101010;">ря</div>
<div class="r" style="left:859px;top:620px;width:54px;height:28px;background:#dcdcdc;border-right:1px solid #8a8a8a;border-bottom:1px solid #8a8a8a;"></div>
<div class="r" style="left:857px;top:618px;width:54px;height:28px;background:#dcdcdc;border-right:1px solid #8a8a8a;border-bottom:1px solid #8a8a8a;"></div>
<div class="r" style="left:855px;top:616px;width:54px;height:28px;background:linear-gradient(#b8b47c 0,#b8b47c 14px,#d0cfd4 14px);border-right:1px solid #000;border-bottom:1px solid #000;box-shadow:inset 1px 1px 0 #fff;"></div>
<div class="t c" style="left:731.5px;top:617px;font-size:11.4px;color:#101010;">ря</div>
<div class="r" style="left:918px;top:618px;width:54px;height:28px;background:#dcdcdc;border-right:1px solid #8a8a8a;border-bottom:1px solid #8a8a8a;"></div>
<div class="r" style="left:916px;top:616px;width:54px;height:28px;background:linear-gradient(#d0cca0,#b8b47c 9px);border-right:1px solid #000;border-bottom:1px solid #000;box-shadow:inset 1px 1px 0 #fff;"></div>
<div class="t c" style="left:792.5px;top:623px;font-size:11.4px;color:#101010;">ря</div>
<div class="r" style="left:977px;top:616px;width:54px;height:28px;background:linear-gradient(#ecc8fb,#cc8cf2 9px);border-right:1px solid #000;border-bottom:1px solid #000;box-shadow:inset 1px 1px 0 #fff;"></div>
<div class="t c" style="left:853.5px;top:623px;font-size:11.4px;color:#101010;">ря</div>
<div class="r" style="left:798px;top:652px;width:54px;height:28px;background:#dcdcdc;border-right:1px solid #8a8a8a;border-bottom:1px solid #8a8a8a;"></div>
<div class="r" style="left:796px;top:650px;width:54px;height:28px;background:#dcdcdc;border-right:1px solid #8a8a8a;border-bottom:1px solid #8a8a8a;"></div>
<div class="r" style="left:794px;top:648px;width:54px;height:28px;background:linear-gradient(#f0fff0,#b0f8b0 9px);border-right:1px solid #000;border-bottom:1px solid #000;box-shadow:inset 1px 1px 0 #fff;"></div>
<div class="t c" style="left:670.5px;top:655px;font-size:11.4px;color:#101010;">лит</div>
<div class="r" style="left:859px;top:652px;width:54px;height:28px;background:#dcdcdc;border-right:1px solid #8a8a8a;border-bottom:1px solid #8a8a8a;"></div>
<div class="r" style="left:857px;top:650px;width:54px;height:28px;background:#dcdcdc;border-right:1px solid #8a8a8a;border-bottom:1px solid #8a8a8a;"></div>
<div class="r" style="left:855px;top:648px;width:54px;height:28px;background:linear-gradient(#f0fff0,#b0f8b0 9px);border-right:1px solid #000;border-bottom:1px solid #000;box-shadow:inset 1px 1px 0 #fff;"></div>
<div class="t c" style="left:731.5px;top:655px;font-size:11.4px;color:#101010;">лит</div>
<div class="r" style="left:920px;top:652px;width:54px;height:28px;background:#dcdcdc;border-right:1px solid #8a8a8a;border-bottom:1px solid #8a8a8a;"></div>
<div class="r" style="left:918px;top:650px;width:54px;height:28px;background:#dcdcdc;border-right:1px solid #8a8a8a;border-bottom:1px solid #8a8a8a;"></div>
<div class="r" style="left:916px;top:648px;width:54px;height:28px;background:linear-gradient(#f0fff0,#b0f8b0 9px);border-right:1px solid #000;border-bottom:1px solid #000;box-shadow:inset 1px 1px 0 #fff;"></div>
<div class="t c" style="left:792.5px;top:655px;font-size:11.4px;color:#101010;">лит</div>
<div class="r" style="left:981px;top:652px;width:54px;height:28px;background:#dcdcdc;border-right:1px solid #8a8a8a;border-bottom:1px solid #8a8a8a;"></div>
<div class="r" style="left:979px;top:650px;width:54px;height:28px;background:#dcdcdc;border-right:1px solid #8a8a8a;border-bottom:1px solid #8a8a8a;"></div>
<div class="r" style="left:977px;top:648px;width:54px;height:28px;background:linear-gradient(#d0cca0,#b8b47c 9px);border-right:1px solid #000;border-bottom:1px solid #000;box-shadow:inset 1px 1px 0 #fff;"></div>
<div class="t c" style="left:853.5px;top:655px;font-size:11.4px;color:#101010;">лит</div>
<div class="r" style="left:1074px;top:701px;width:18px;height:18px;background:#bdbdc0;"></div>
<svg style="left:0;top:0" width="1099" height="803"><path d="M1076 708 L1091 708 L1083.5 715.5 Z" fill="#f4f000"/></svg>
<div class="r" style="left:3px;top:721px;width:1093px;height:2px;background:#fafafa;"></div>
<div class="r" style="left:3px;top:723px;width:1093px;height:1px;background:#7890b0;"></div>
<div class="r" style="left:3px;top:724px;width:1093px;height:21px;background:#f0eded;"></div>
<div class="t" style="left:6px;top:728px;font-size:11.4px;color:#160a72;font-weight:normal;">Ready</div>
<div class="t" style="left:848px;top:728px;font-size:11.4px;color:#160a72;font-weight:normal;">NUM</div>
<div class="t" style="left:917px;top:728px;font-size:11.4px;color:#160a72;font-weight:normal;letter-spacing:-0.6px;">100%</div>
<svg style="left:0;top:0" width="1099" height="803">
<line x1="962" y1="734.5" x2="1062" y2="734.5" stroke="#9aaac4" stroke-width="1"/>
<line x1="1011.5" y1="731" x2="1011.5" y2="738" stroke="#9aaac4" stroke-width="1"/>
<circle cx="955" cy="734.5" r="6.8" fill="#8e9cc0" stroke="#7080a8" stroke-width="0.8"/>
<circle cx="955" cy="733.5" r="5" fill="#aab6d4"/>
<rect x="950.5" y="733.2" width="9" height="2.6" fill="#fff"/>
<circle cx="1069" cy="734.5" r="6.8" fill="#8e9cc0" stroke="#7080a8" stroke-width="0.8"/>
<circle cx="1069" cy="733.5" r="5" fill="#aab6d4"/>
<rect x="1064.5" y="733.2" width="9" height="2.6" fill="#fff"/>
<rect x="1067.7" y="730" width="2.6" height="9" fill="#fff"/>
<path d="M987.5 728.5 L993.5 728.5 L993.5 739 L990.5 742 L987.5 739 Z" fill="#dfe6f2" stroke="#6a7fa8" stroke-width="1"/>
<rect x="1093" y="730" width="2" height="2" fill="#2a3a64"/>
<rect x="1089" y="734" width="2" height="2" fill="#2a3a64"/>
<rect x="1093" y="734" width="2" height="2" fill="#2a3a64"/>
<rect x="1085" y="738" width="2" height="2" fill="#2a3a64"/>
<rect x="1089" y="738" width="2" height="2" fill="#2a3a64"/>
<rect x="1093" y="738" width="2" height="2" fill="#2a3a64"/>
</svg>
<div class="r" style="left:192px;top:137px;width:622px;height:662px;background:#f0f0f0;border:1px solid #1883d7;box-shadow:0 2px 16px rgba(0,0,0,0.3);"></div>
<div class="r" style="left:193px;top:138px;width:620px;height:25px;background:#fff;"></div>
<div class="t" style="left:196px;top:143px;font-size:11.8px;color:#000;font-weight:normal;">Дополнительные тесты</div>
<svg style="left:0;top:0" width="1099" height="803"><g stroke="#000" stroke-width="1"><line x1="792.5" y1="144.5" x2="803" y2="155"/><line x1="803" y1="144.5" x2="792.5" y2="155"/></g></svg>
<div class="t" style="left:204px;top:174px;font-size:11.4px;color:#000;font-weight:normal;">Идет работа ...</div>
<div class="r" style="left:204px;top:194px;width:599px;height:23px;background:#06ac26;border:1px solid #c8c2c6;"></div>
<div class="r" style="left:204px;top:218px;width:599px;height:23px;background:#06ac26;border:1px solid #c8c2c6;"></div>
<div class="r" style="left:204px;top:244px;width:599px;height:23px;background:#06ac26;border:1px solid #c8c2c6;"></div>
<div class="t" style="left:204px;top:278px;font-size:11.4px;color:#000;font-weight:normal;">Общее:</div>
<div class="r" style="left:204px;top:298px;width:599px;height:177px;background:#fff;border:1px solid #828790;"></div>
<div class="r" style="left:208px;top:302px;width:591px;height:55px;border:2px solid #ff0000;"></div>
<div class="t" style="left:213px;top:308px;font-size:11.4px;color:#000080;font-weight:bold;">Состояние</div>
<div class="t" style="left:280px;top:308px;font-size:11.4px;color:#000;font-weight:normal;">Не удалось</div>
<div class="t" style="left:213px;top:323px;font-size:11.4px;color:#000080;font-weight:bold;letter-spacing:0.25px;">Ограничения:</div>
<div class="t" style="left:300px;top:323px;font-size:11.4px;color:#000;font-weight:normal;">Рабочее время:Классы,Учителя,</div>
<div class="t" style="left:213px;top:338px;font-size:11.4px;color:#000080;font-weight:bold;">Объекты:</div>
<div class="t" style="left:275px;top:338px;font-size:11.4px;color:#000;font-weight:normal;letter-spacing:-0.25px;">5Б,5Е,6В,6Г,10А</div>
<div class="t" style="left:374px;top:308px;font-size:11.4px;color:#1e2a78;font-weight:normal;text-decoration:underline;">Показать</div>
<div class="r" style="left:208px;top:361px;width:591px;height:55px;border:2px solid #008000;"></div>
<div class="t" style="left:213px;top:367px;font-size:11.4px;color:#000080;font-weight:bold;">Состояние</div>
<div class="t" style="left:280px;top:367px;font-size:11.4px;color:#000;font-weight:normal;">OK</div>
<div class="t" style="left:213px;top:382px;font-size:11.4px;color:#000080;font-weight:bold;letter-spacing:0.25px;">Ограничения:</div>
<div class="t" style="left:300px;top:382px;font-size:11.4px;color:#000;font-weight:normal;">Рабочее время:Классы,</div>
<div class="t" style="left:213px;top:397px;font-size:11.4px;color:#000080;font-weight:bold;">Объекты:</div>
<div class="t" style="left:275px;top:397px;font-size:11.4px;color:#000;font-weight:normal;letter-spacing:-0.18px;">5А,5Б,5В,5Г,5Д,5Е,6А,6Б,6В,6Г,6Д,6Е,6Ж,7А,7Б,7В,8А,8Б,9А,9Б,9В,10А,10Б,11А,11Б</div>
<div class="t" style="left:526px;top:318px;font-size:16px;color:#ee1c24;font-weight:bold;line-height:18px;-webkit-text-stroke:0.3px #ee1c24;">2.</div>
<div class="t" style="left:526px;top:364px;font-size:16px;color:#ee1c24;font-weight:bold;line-height:18px;-webkit-text-stroke:0.3px #ee1c24;">1.</div>
<div class="t" style="left:204px;top:486px;font-size:11.4px;color:#000;font-weight:normal;">Индивидуальные результаты теста:</div>
<div class="r" style="left:204px;top:514px;width:599px;height:223px;background:#fff;border:1px solid #828790;"></div>
<div class="r" style="left:205px;top:515px;width:597px;height:220px;overflow:hidden;">
<div class="r" style="left:3px;top:3px;width:574px;height:54px;border:2px solid #008000;"></div>
<div class="t" style="left:8px;top:9px;font-size:11.4px;color:#000080;font-weight:bold;letter-spacing:-0.6px;">Статус:</div>
<div class="t" style="left:52px;top:9px;font-size:11.4px;color:#000;">OK</div>
<div class="t" style="left:8px;top:24px;font-size:11.4px;color:#000080;font-weight:bold;">Тип теста:</div>
<div class="t" style="left:71px;top:24px;font-size:11.4px;color:#000;">Рабочее время:Классы,Учителя,</div>
<div class="t" style="left:8px;top:39px;font-size:11.4px;color:#000080;font-weight:bold;">Объекты:</div>
<div class="t" style="left:70px;top:39px;font-size:11.4px;color:#000;letter-spacing:-0.3px;">5Б,5Е,6В,6Г</div>
<div class="r" style="left:3px;top:62px;width:574px;height:54px;border:2px solid #008000;"></div>
<div class="t" style="left:8px;top:68px;font-size:11.4px;color:#000080;font-weight:bold;letter-spacing:-0.6px;">Статус:</div>
<div class="t" style="left:52px;top:68px;font-size:11.4px;color:#000;">OK</div>
<div class="t" style="left:8px;top:83px;font-size:11.4px;color:#000080;font-weight:bold;">Тип теста:</div>
<div class="t" style="left:71px;top:83px;font-size:11.4px;color:#000;">Рабочее время:Классы,Учителя,</div>
<div class="t" style="left:8px;top:98px;font-size:11.4px;color:#000080;font-weight:bold;">Объекты:</div>
<div class="t" style="left:70px;top:98px;font-size:11.4px;color:#000;letter-spacing:-0.3px;">5Б,5Е,6В,10А</div>
<div class="r" style="left:3px;top:121px;width:574px;height:54px;border:2px solid #008000;"></div>
<div class="t" style="left:8px;top:127px;font-size:11.4px;color:#000080;font-weight:bold;letter-spacing:-0.6px;">Статус:</div>
<div class="t" style="left:52px;top:127px;font-size:11.4px;color:#000;">OK</div>
<div class="t" style="left:8px;top:142px;font-size:11.4px;color:#000080;font-weight:bold;">Тип теста:</div>
<div class="t" style="left:71px;top:142px;font-size:11.4px;color:#000;">Рабочее время:Классы,Учителя,</div>
<div class="t" style="left:8px;top:157px;font-size:11.4px;color:#000080;font-weight:bold;">Объекты:</div>
<div class="t" style="left:70px;top:157px;font-size:11.4px;color:#000;letter-spacing:-0.3px;">5Б,5Е,6Г,10А</div>
<div class="r" style="left:3px;top:180px;width:574px;height:54px;border:2px solid #008000;"></div>
<div class="t" style="left:8px;top:186px;font-size:11.4px;color:#000080;font-weight:bold;letter-spacing:-0.6px;">Статус:</div>
<div class="t" style="left:52px;top:186px;font-size:11.4px;color:#000;">OK</div>
<div class="t" style="left:8px;top:201px;font-size:11.4px;color:#000080;font-weight:bold;">Тип теста:</div>
<div class="t" style="left:71px;top:201px;font-size:11.4px;color:#000;">Рабочее время:Классы,Учителя,</div>
<div class="t" style="left:8px;top:216px;font-size:11.4px;color:#000080;font-weight:bold;">Объекты:</div>
<div class="t" style="left:70px;top:216px;font-size:11.4px;color:#000;letter-spacing:-0.3px;">5Б,6В,6Г,10А</div>
</div>
<div class="t" style="left:526px;top:525px;font-size:16px;color:#ee1c24;font-weight:bold;line-height:18px;-webkit-text-stroke:0.3px #ee1c24;">3.</div>
<div class="r" style="left:785px;top:516px;width:16px;height:219px;background:#f0f0f0;"></div>
<div class="r" style="left:785px;top:533px;width:16px;height:17px;background:#cdcdcd;"></div>
<svg style="left:0;top:0" width="1099" height="803"><g stroke="#606060" stroke-width="1.6" fill="none"><polyline points="789,527 793,523 797,527"/><polyline points="789,724.5 793,728.5 797,724.5"/></g></svg>
<div class="r" style="left:728px;top:765px;width:73px;height:21px;background:#e1e1e1;border:2px solid #0078d7;box-shadow:inset 0 0 0 1px #f2f2f2;"></div>
<div class="t c" style="left:613.5px;top:769px;font-size:11.4px;color:#000;">Закрыть</div>
</body></html>
